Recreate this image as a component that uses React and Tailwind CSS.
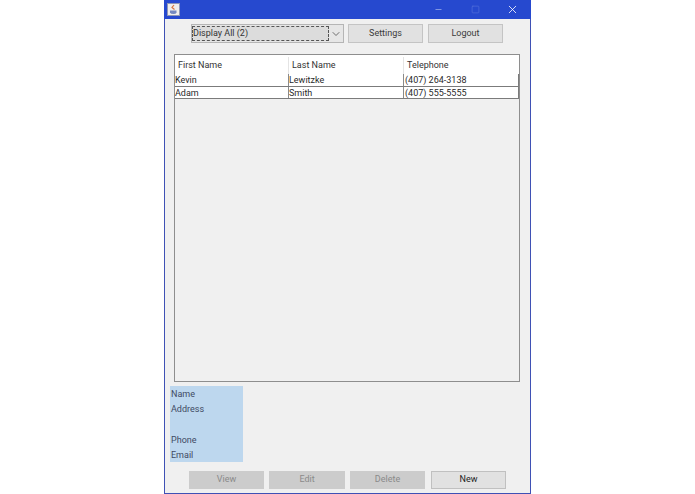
import React from 'react';
import { ChevronDown, Minus, Square, X } from 'lucide-react';

const contacts = [
  { first: 'Kevin', last: 'Lewitzke', phone: '(407) 264-3138', height: 'h-[13px]' },
  { first: 'Adam', last: 'Smith', phone: '(407) 555-5555', height: 'h-[12px]' },
];

function JavaIcon() {
  return (
    <div className="w-[13px] h-[13px] border border-[#8f96b4] bg-[#f0eeec] flex items-center justify-center">
      <svg width="11" height="11" viewBox="0 0 11 11">
        <path d="M6 1 L4 3.5 L6.5 5.5" fill="none" stroke="#d9743c" strokeWidth="1.2" />
        <path d="M2 6.5 H8.5 V8.5 Q8 10 5.5 10 Q2.5 10 2 8.5 Z" fill="#7488c0" />
      </svg>
    </div>
  );
}

function ToolButton({ label, className = '' }) {
  return (
    <button className={`h-[19px] bg-[#e1e1e1] border border-[#c4c4c4] flex items-center justify-center text-[9px] text-[#3a3a3a] ${className}`}>
      {label}
    </button>
  );
}

function ActionButton({ label, disabled, className = '' }) {
  return (
    <button
      className={`h-[18px] flex items-center justify-center text-[9px] border ${
        disabled
          ? 'bg-[#cccccc] border-[#cccccc] text-[#8a8a8a]'
          : 'bg-[#e1e1e1] border-[#c0c0c0] text-[#222222]'
      } ${className}`}
    >
      {label}
    </button>
  );
}

function Row({ person }) {
  return (
    <div className={`flex ${person.height} border-b border-[#7b7b7b] bg-white text-[9px] text-[#2a2a2a] leading-[12px]`}>
      <div className="w-[114px] border-r border-[#8a8a8a]">{person.first}</div>
      <div className="w-[115px] border-r border-[#8a8a8a]">{person.last}</div>
      <div className="flex-1 pl-[1px] border-r border-[#7b7b7b]">{person.phone}</div>
    </div>
  );
}

export default function App() {
  return (
    <div className="w-[695px] h-[494px] bg-white overflow-hidden" style={{ fontFamily: 'Roboto, Tahoma, sans-serif' }}>
      <div className="mx-auto w-[367px] h-[494px] flex flex-col bg-[#f0f0f0] border-x border-b border-[#3f51b5]">
        {/* title bar */}
        <div className="h-[19px] -mx-px bg-[#2649cf] flex items-center pl-[3px] shrink-0">
          <JavaIcon />
          <div className="ml-auto flex items-center">
            <div className="w-[36px] flex justify-center">
              <Minus className="w-[9px] h-[9px] text-[#c9d2f2]" strokeWidth={1.5} />
            </div>
            <div className="w-[38px] flex justify-center">
              <Square className="w-[9px] h-[9px] text-[#5d78de]" strokeWidth={1.5} />
            </div>
            <div className="w-[36px] flex justify-center mr-[1px]">
              <X className="w-[13px] h-[13px] text-white" strokeWidth={1.5} />
            </div>
          </div>
        </div>

        {/* toolbar */}
        <div className="flex items-center mt-[5px] ml-[26px] h-[19px] shrink-0">
          <div className="w-[153px] h-[19px] bg-[#e6e6e6] border border-[#b5b5b5] flex items-center">
            <div className="w-[137px] h-[15px] bg-[#dcdcdc] border border-dashed border-[#555555] flex items-center text-[9px] text-[#333333]">
              Display All (2)
            </div>
            <ChevronDown className="w-[12px] h-[12px] ml-[1px] text-[#444444]" strokeWidth={1.5} />
          </div>
          <ToolButton label="Settings" className="w-[75px] ml-[4px]" />
          <ToolButton label="Logout" className="w-[75px] ml-[5px]" />
        </div>

        {/* table */}
        <div className="mt-[11px] ml-[9px] w-[346px] h-[328px] border border-[#8e8e8e] shrink-0">
          <div className="flex h-[19px] pt-[2px] bg-white text-[9px] text-[#333333]">
            <div className="w-[114px] pl-[3px] border-r border-[#e4e4e4] flex items-center">First Name</div>
            <div className="w-[115px] pl-[3px] border-r border-[#e4e4e4] flex items-center">Last Name</div>
            <div className="flex-1 pl-[3px] flex items-center">Telephone</div>
          </div>
          {contacts.map((person) => (
            <Row key={person.first} person={person} />
          ))}
        </div>

        {/* details */}
        <div className="mt-[4px] ml-[5px] w-[73px] h-[76px] bg-[#bdd7ee] pl-[1px] pt-[1px] text-[9px] leading-[15px] text-[#404a63] shrink-0">
          <div>Name</div>
          <div>Address</div>
          <div className="h-[16px]" />
          <div>Phone</div>
          <div>Email</div>
        </div>

        {/* actions */}
        <div className="flex mt-[9px] ml-[24px] shrink-0">
          <ActionButton label="View" disabled className="w-[75px]" />
          <ActionButton label="Edit" disabled className="w-[76px] ml-[5px]" />
          <ActionButton label="Delete" disabled className="w-[75px] ml-[5px]" />
          <ActionButton label="New" className="w-[75px] ml-[6px]" />
        </div>
      </div>
    </div>
  );
}
